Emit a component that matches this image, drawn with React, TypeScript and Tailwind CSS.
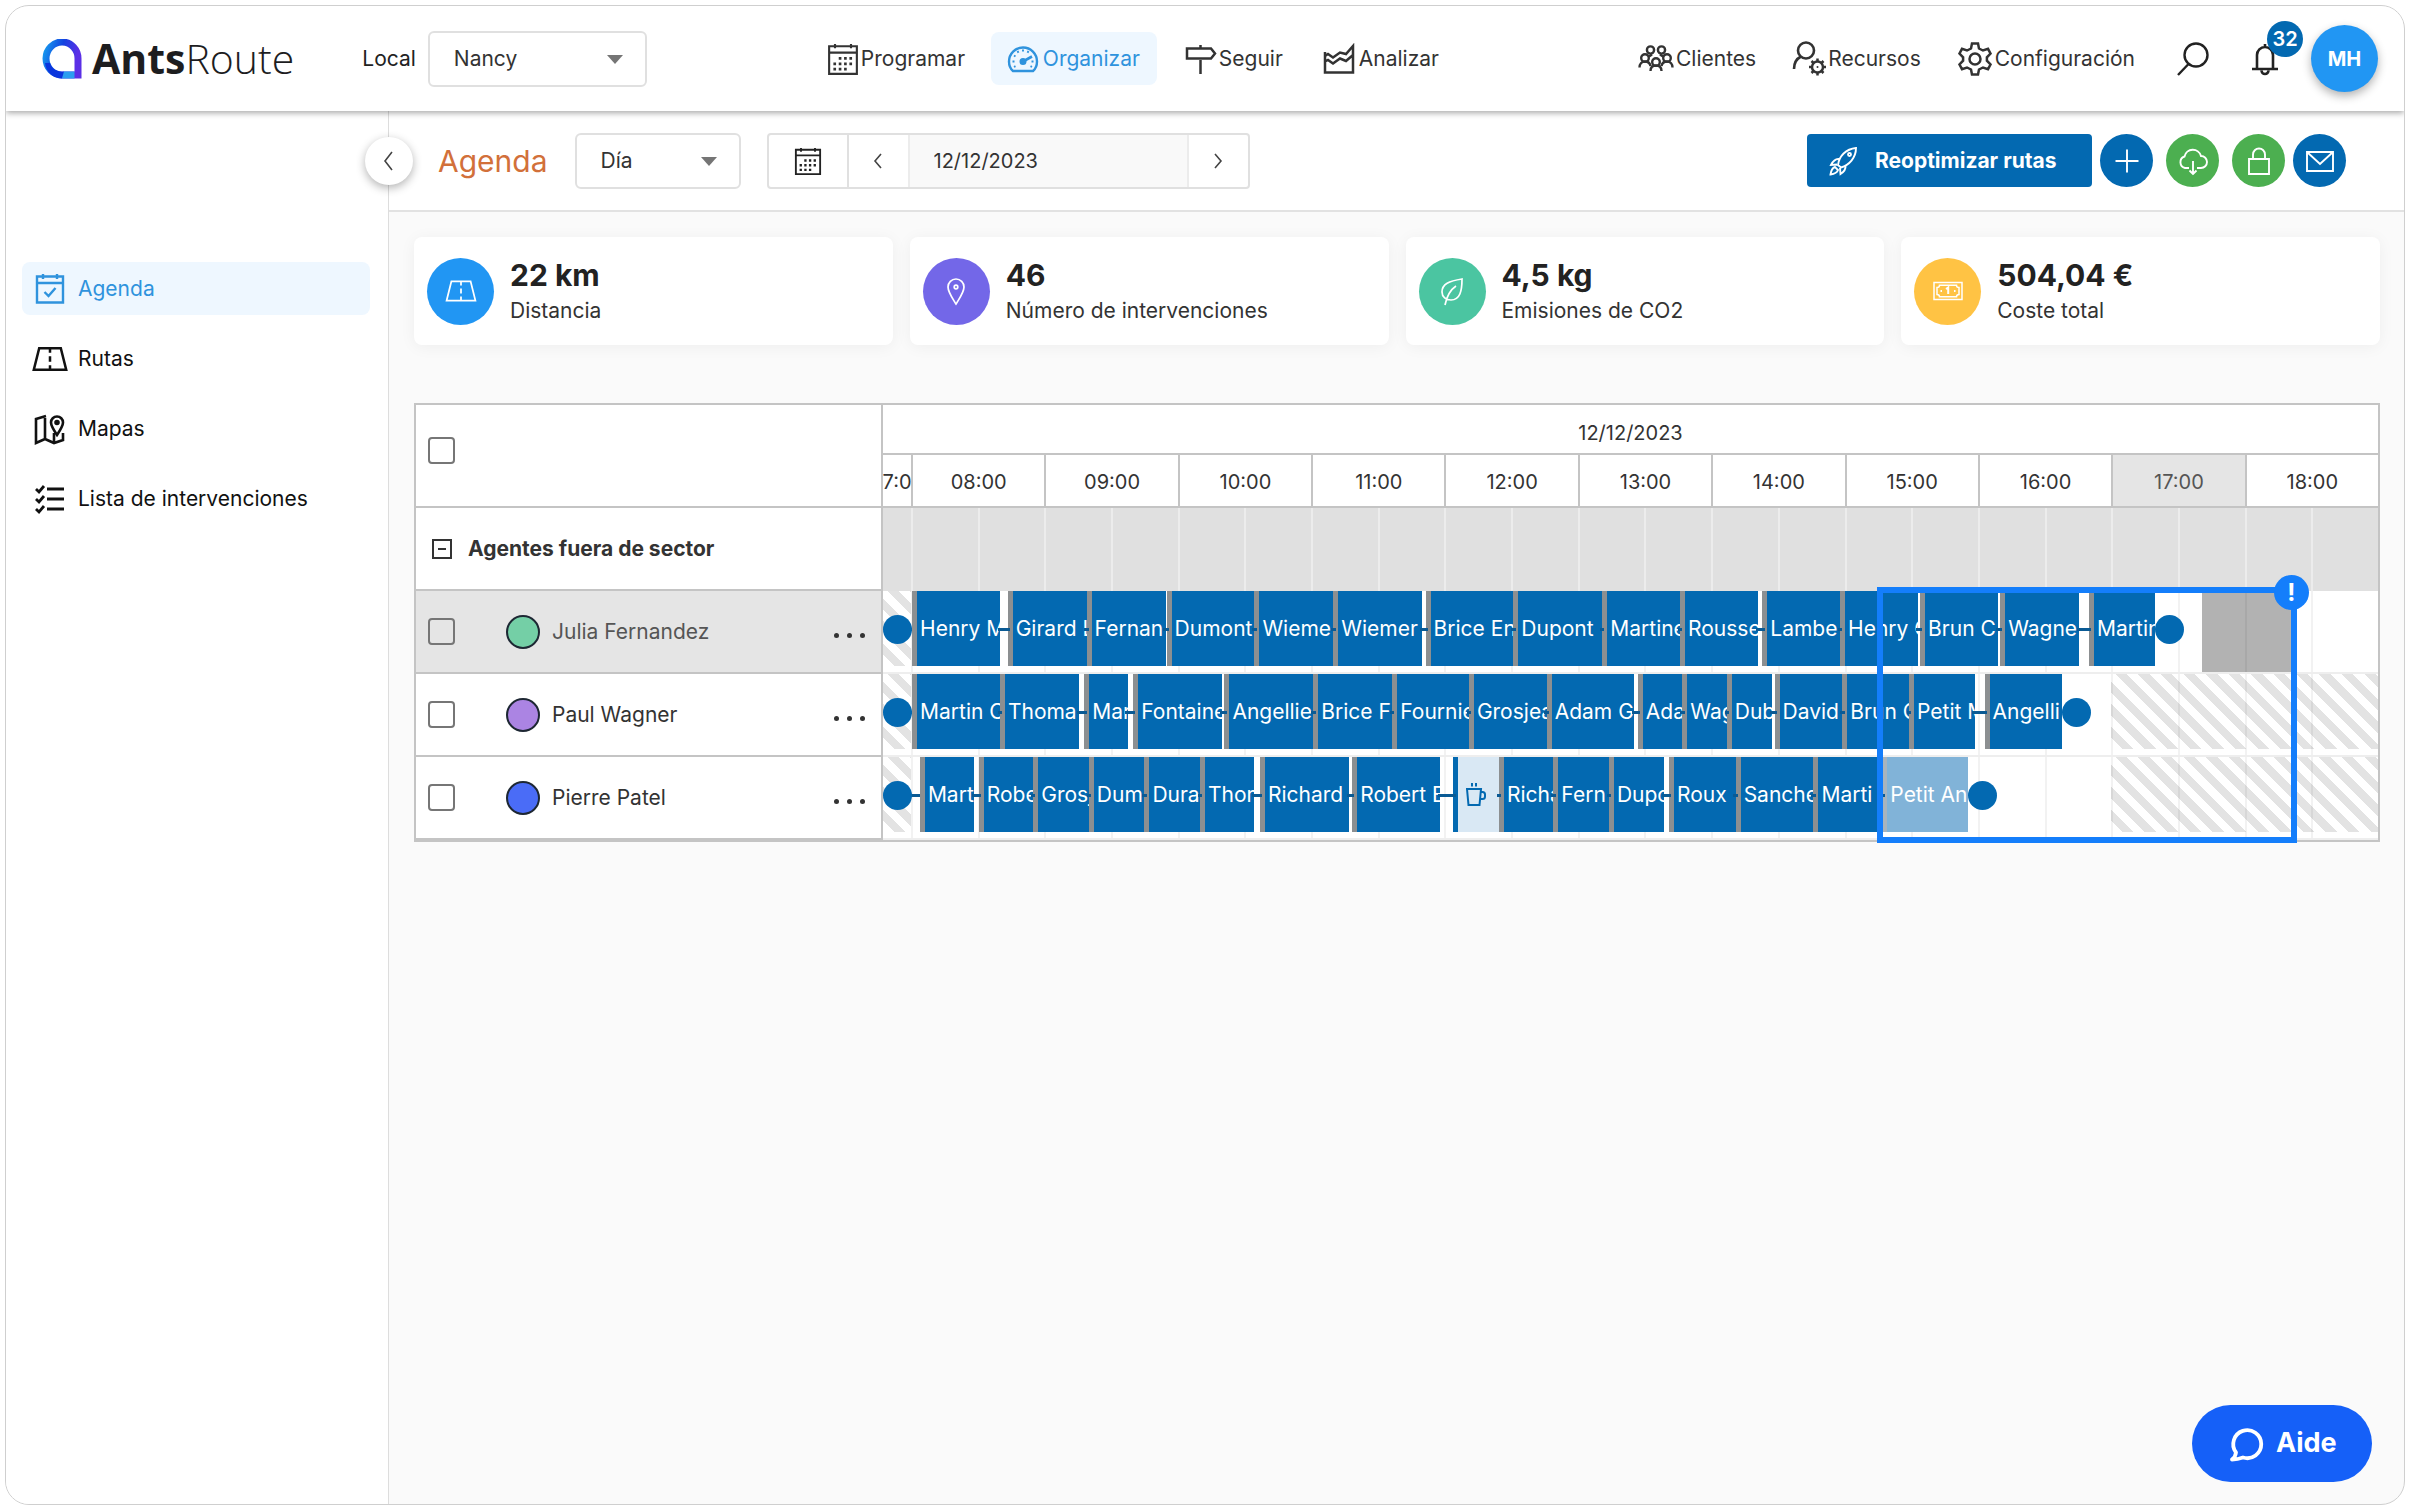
import type { ReactNode } from 'react'

type Stop = { name: string; from: number; to: number; kind?: 'break' | 'faded' }

// minutes counted from 08:00
const agents: { name: string; dot: string; active?: boolean; stops: Stop[] }[] = [
  {
    name: 'Julia Fernandez',
    dot: 'bg-[#74cfa6]',
    active: true,
    stops: [
      { name: 'Henry M', from: 0.5, to: 40 },
      { name: 'Girard L', from: 43.5, to: 79 },
      { name: 'Fernan', from: 79, to: 114.5 },
      { name: 'Dumont', from: 115, to: 154.5 },
      { name: 'Wieme', from: 154.5, to: 190 },
      { name: 'Wiemer', from: 190, to: 230 },
      { name: 'Brice En', from: 231.5, to: 271 },
      { name: 'Dupont', from: 271, to: 311 },
      { name: 'Martine', from: 311, to: 346 },
      { name: 'Rousse', from: 346, to: 381 },
      { name: 'Lambe', from: 383, to: 418 },
      { name: 'Henry C', from: 418, to: 453 },
      { name: 'Brun C', from: 454, to: 489 },
      { name: 'Wagne', from: 490, to: 525.5 },
      { name: 'Martin', from: 530, to: 559.5 },
    ],
  },
  {
    name: 'Paul Wagner',
    dot: 'bg-[#ab84e3]',
    stops: [
      { name: 'Martin C', from: 0.5, to: 40 },
      { name: 'Thoma', from: 40, to: 75.5 },
      { name: 'Mar', from: 78, to: 97.5 },
      { name: 'Fontaine', from: 100, to: 140 },
      { name: 'Angellie', from: 141, to: 181 },
      { name: 'Brice F', from: 181, to: 216.5 },
      { name: 'Fournie', from: 216.5, to: 251 },
      { name: 'Grosjea', from: 251, to: 286 },
      { name: 'Adam G', from: 286, to: 325.5 },
      { name: 'Ada', from: 327, to: 347 },
      { name: 'Wag', from: 347, to: 367 },
      { name: 'Dub', from: 367, to: 387.5 },
      { name: 'David', from: 388.5, to: 419 },
      { name: 'Brun C', from: 419, to: 449 },
      { name: 'Petit M', from: 449, to: 478.5 },
      { name: 'Angelli', from: 483, to: 518 },
    ],
  },
  {
    name: 'Pierre Patel',
    dot: 'bg-[#4a6cf7]',
    stops: [
      { name: 'Mart', from: 4, to: 28.5 },
      { name: 'Robe', from: 30.5, to: 55 },
      { name: 'Grosj', from: 55, to: 80 },
      { name: 'Dum', from: 80, to: 105 },
      { name: 'Dura', from: 105, to: 130 },
      { name: 'Thom', from: 130, to: 154.5 },
      { name: 'Richard', from: 157, to: 197 },
      { name: 'Robert B', from: 198.5, to: 238 },
      { name: '', from: 244, to: 264.5, kind: 'break' },
      { name: 'Richa', from: 264.5, to: 289 },
      { name: 'Fern', from: 289, to: 314 },
      { name: 'Dupo', from: 314, to: 339 },
      { name: 'Roux', from: 341, to: 371 },
      { name: 'Sanche', from: 371, to: 406 },
      { name: 'Marti', from: 406, to: 437 },
      { name: 'Petit An', from: 437, to: 475.5, kind: 'faded' },
    ],
  },
]

const hours = ['08:00', '09:00', '10:00', '11:00', '12:00', '13:00', '14:00', '15:00', '16:00', '17:00', '18:00']
const pct = (min: number) => `${(min / 660) * 100}%`

function Icon({ className, box = 32, w = 2, children }: { className: string; box?: number; w?: number; children: ReactNode }) {
  return (
    <svg viewBox={`0 0 ${box} ${box}`} className={`shrink-0 ${className}`} fill="none" stroke="currentColor" strokeWidth={w} aria-hidden="true">
      {children}
    </svg>
  )
}

function CalendarIcon({ className }: { className: string }) {
  return (
    <Icon className={className} box={30}>
      <path d="M2 3h26v26H2zM2 9h26M7.500 1v4M22.500 1v4" />
      <path d="M11 14.500h2.500M16 14.500h2.500M21 14.500h2.500M6 19.500h2.500M11 19.500h2.500M16 19.500h2.500M21 19.500h2.500M6 24.500h2.500M11 24.500h2.500M16 24.500h2.500" strokeWidth={2.600} />
    </Icon>
  )
}

function GaugeIcon() {
  return (
    <Icon className="size-8">
      <path d="M6 28C3 25.500 2 22 2 18.500a14 14 0 0 1 28 0c0 3.500-1 7-4 9.500z" strokeWidth={2.400} />
      <path d="M16 6.500v2M10.500 8l1 1.800M21.500 8l-1 1.800M7 12.500l1.500 1M5.500 18.500h2M24.500 18.500h2M7 24l1.500-.8M25 24l-1.500-.8" strokeWidth={1.900} />
      <path d="M16 18.500l9-5" strokeWidth={2.600} />
      <circle cx="16" cy="18.500" r="2.500" fill="currentColor" />
    </Icon>
  )
}

function SignIcon() {
  return (
    <Icon className="size-8">
      <path d="M2 5.500h24l4 5-4 5H2zM15.500 2v3.500M15.500 17v14" strokeWidth={2.500} />
    </Icon>
  )
}

function ChartIcon() {
  return (
    <Icon className="size-8">
      <path d="M2 9v20.500h28V3l-7 8-6-1.500-7 5L5 11 2 13M2 18.500l3-1.500 5 3.500 7-5 6 2.500 7-6" strokeWidth={2.500} />
    </Icon>
  )
}

function PeopleIcon() {
  return (
    <Icon className="size-9" box={36} w={2.400}>
      <circle cx="12.500" cy="9" r="3.600" />
      <circle cx="23.500" cy="9" r="3.600" />
      <circle cx="7" cy="17" r="3.800" />
      <circle cx="29" cy="17" r="3.800" />
      <circle cx="18" cy="21" r="3.800" />
      <path d="M1.500 26.500c0-3.500 2-6 5.500-6s5 2 5.500 4.500M34.500 26.500c0-3.500-2-6-5.500-6s-5 2-5.500 4.500M12.500 30c0-3.200 2-5.500 5.500-5.500s5.500 2.300 5.500 5.500M11 15.500l3-2M25 15.500l-3-2" />
    </Icon>
  )
}

function ResourcesIcon() {
  return (
    <Icon className="size-9" box={36}>
      <circle cx="14" cy="9.500" r="8" strokeWidth={2.600} />
      <path d="M9 15.500C5 17.500 2 21.500 2 28" strokeWidth={2.600} />
      <circle cx="25.500" cy="26" r="5.500" strokeWidth={2.500} />
      <path d="M25.500 17.500v3M25.500 31.500v3M17 26h3M31 26h3M19.500 20l2 2M29.500 30l2 2M31.500 20l-2 2M21.500 30l-2 2" strokeWidth={2.500} />
      <circle cx="25.500" cy="26" r="1" fill="currentColor" stroke="none" />
    </Icon>
  )
}

function GearIcon() {
  return (
    <Icon className="size-9" box={36}>
      <path d="M15 2.500h6l1 5 4 2 5-1.700 2.500 4.700-3.600 3.800v3.400l3.600 3.800-2.500 4.700-5-1.700-4 2-1 5h-6l-1-5-4-2-5 1.700-2.500-4.700 3.600-3.800v-3.400L2.500 12.500 5 7.800l5 1.700 4-2z" strokeWidth={2.500} />
      <circle cx="18" cy="18" r="5.500" strokeWidth={2.500} />
    </Icon>
  )
}

function RoadIcon({ className, w }: { className: string; w?: number }) {
  return (
    <Icon className={className} box={40} w={w}>
      <path d="M8 8h24l6 24H2zM20 8v5M20 17v6M20 27v5" />
    </Icon>
  )
}

function Chevron({ d }: { d: string }) {
  return (
    <Icon className="size-5 text-[#444]" box={20} w={1.600}>
      <path d={d} />
    </Icon>
  )
}

function Dropdown({ label, value, className }: { label: string; value: string; className: string }) {
  return (
    <div className={`relative h-14 ${className}`}>
      <select aria-label={label} className="size-full appearance-none rounded-md border-2 border-[#e0e0e0] bg-white pl-6 text-[21px] text-[#333]">
        <option>{value}</option>
      </select>
      <svg viewBox="0 0 16 9" className="pointer-events-none absolute top-6 right-6 h-[9px] w-4" aria-hidden="true">
        <path d="M0 0h16L8 9z" fill="#757575" />
      </svg>
    </div>
  )
}

function Header() {
  return (
    <header className="relative z-20 flex h-[105px] shrink-0 items-center bg-white pr-[26px] pl-9 shadow-[0_2px_6px_rgba(0,0,0,0.35)]">
      <a href="#" className="flex items-center" aria-label="AntsRoute">
        <svg viewBox="0 0 40 40" className="size-10" aria-hidden="true">
          <defs>
            <linearGradient id="logo" x1="0" y1="0" x2="1" y2="0.3">
              <stop offset="0" stopColor="#1798ee" />
              <stop offset="0.5" stopColor="#1243e0" />
              <stop offset="1" stopColor="#5b2fe6" />
            </linearGradient>
          </defs>
          <path d="M36 36V20A16 16.500 0 1 0 20 36z" fill="none" stroke="url(#logo)" strokeWidth="7" />
          <path d="M3 24A17.500 17.500 0 0 0 20 39.500l2-7A12 12 0 0 1 8 24z" fill="#0a35dd" />
          <path d="M22 32.500h10.500v7H20z" fill="#2a9df0" />
        </svg>
        <span className="ml-2.5 font-['Open_Sans'] text-[41px] leading-none text-[#1d1d1f]">
          <b className="font-bold">Ants</b>
          <span className="font-light">Route</span>
        </span>
      </a>
      <span className="mr-3 ml-[68px] text-[21px] text-[#222]">Local</span>
      <Dropdown label="Local" value="Nancy" className="w-[219px]" />
      <nav className="ml-[164px] flex items-center text-[21px] text-[#333]">
        <a href="#" className="flex h-[53px] w-[180px] items-center gap-0.5 pl-4">
          <CalendarIcon className="size-8" />
          Programar
        </a>
        <a href="#" className="flex h-[53px] w-[166px] items-center gap-1 rounded-lg bg-[#eef7ff] pl-4 text-[#2f93dd]">
          <GaugeIcon />
          Organizar
        </a>
        <a href="#" className="flex h-[53px] w-[138px] items-center gap-0.5 pl-7">
          <SignIcon />
          Seguir
        </a>
        <a href="#" className="flex h-[53px] items-center gap-1 pl-7">
          <ChartIcon />
          Analizar
        </a>
      </nav>
      <div className="ml-auto flex items-center text-[21px] text-[#333]">
        <a href="#" className="mr-9 flex items-center gap-0.5">
          <PeopleIcon />
          Clientes
        </a>
        <a href="#" className="mr-9 flex items-center">
          <ResourcesIcon />
          Recursos
        </a>
        <a href="#" className="flex items-center gap-0.5">
          <GearIcon />
          Configuración
        </a>
        <button aria-label="Buscar" className="ml-10">
          <Icon className="size-9 text-[#222]" box={36} w={2.400}>
            <circle cx="21" cy="14" r="11.500" />
            <path d="M13.500 23L3 34" />
          </Icon>
        </button>
        <button aria-label="Notificaciones" className="relative ml-9">
          <Icon className="size-9 text-[#222]" box={36} w={2.600}>
            <path d="M10 28V14a8 8 0 0 1 16 0v14M5 28h26M18 3v3M14.500 29.500a3.500 3.500 0 0 0 7 0" />
          </Icon>
          <span className="absolute -top-5 left-5 flex size-9 items-center justify-center rounded-full bg-[#0369b1] text-xl font-semibold text-white">32</span>
        </button>
        <button className="ml-7 size-[67px] rounded-full bg-[#2196f3] text-xl font-bold text-white shadow-[0_4px_10px_rgba(0,0,0,0.3)]">MH</button>
      </div>
    </header>
  )
}

function Sidebar() {
  const item = 'flex h-[53px] items-center gap-2.5 rounded-lg pl-2.5'
  return (
    <aside className="w-[383px] shrink-0 border-r border-[#ddd] bg-white pt-[151px] pr-[18px] pl-4">
      <nav className="flex flex-col gap-[17px] text-[21px] text-[#111]">
        <a href="#" className={`${item} bg-[#eef7ff] text-[#2f93dd]`}>
          <Icon className="size-9" box={36} w={2.400}>
            <path d="M5 5.500h26v26H5zM5 12h26M11 3v5M25 3v5M12.500 21l4 4 7-8" />
          </Icon>
          Agenda
        </a>
        <a href="#" className={item}>
          <RoadIcon className="size-9" w={2.800} />
          Rutas
        </a>
        <a href="#" className={item}>
          <Icon className="size-9" box={36} w={2.600}>
            <path d="M14 5L4 8v24l9-4 9 4 9-3V22M13 7v21M22 22v10" />
            <path d="M25 24c-4-6-6-9-6-12.500a6 6 0 0 1 12 0C31 15 29 18 25 24z" />
            <circle cx="25" cy="11.500" r="1.500" fill="currentColor" />
          </Icon>
          Mapas
        </a>
        <a href="#" className={item}>
          <Icon className="size-9" box={36} w={2.800}>
            <path d="M15 8h17M15 18h17M15 28h17M4 8l3 3 5-6M4 18l3 3 5-6M4 28l3 3 5-6" />
          </Icon>
          Lista de intervenciones
        </a>
      </nav>
    </aside>
  )
}

const round = 'flex size-[53px] items-center justify-center rounded-full text-white'

function Toolbar() {
  return (
    <div className="relative flex h-[101px] shrink-0 items-center border-b-2 border-[#e2e2e2] bg-white pr-[58px] pl-[49px]">
      <button aria-label="Plegar menú" className="absolute top-[26px] -left-6 flex size-12 items-center justify-center rounded-full bg-white shadow-[0_3px_10px_rgba(0,0,0,0.3)]">
        <Chevron d="M13 1L6 10l7 9" />
      </button>
      <h1 className="text-3xl text-[#d2703a]">Agenda</h1>
      <Dropdown label="Vista" value="Día" className="ml-[27px] w-[166px]" />
      <div className="ml-[26px] flex h-14 rounded border-2 border-[#e0e0e0]">
        <button aria-label="Calendario" className="flex w-20 items-center justify-center border-r-2 border-[#e0e0e0] text-[#222]">
          <CalendarIcon className="size-7" />
        </button>
        <button aria-label="Día anterior" className="flex w-[61px] items-center justify-center border-r-2 border-[#ececec]">
          <Chevron d="M13 3l-6 7 6 7" />
        </button>
        <input aria-label="Fecha" defaultValue="12/12/2023" className="w-[277px] bg-[#f9f9f9] pl-6 text-xl text-[#333]" />
        <button aria-label="Día siguiente" className="flex w-[61px] items-center justify-center border-l-2 border-[#ececec]">
          <Chevron d="M7 3l6 7-6 7" />
        </button>
      </div>
      <button className="ml-auto flex h-[53px] w-[285px] items-center gap-4 rounded bg-[#0369b1] pl-5 text-[21px] font-bold text-white">
        <Icon className="size-8" w={1.900}>
          <path d="M11 20C12 11 19 4 29 3c0 10-7 17-15 19.500zM12 14c-4-.5-6 2-8 6l6-.5M18.500 21c.5 4-2 6-5 8l-.5-6M8 22c-3 1-4 4-4.500 7.500C7 29 10 28 11 25z" />
          <circle cx="22.500" cy="9.500" r="1.500" />
        </Icon>
        Reoptimizar rutas
      </button>
      <button aria-label="Añadir" className={`${round} ml-2 bg-[#0369b1]`}>
        <Icon className="size-8" w={1.900}>
          <path d="M16 4.500v23M4.500 16h23" />
        </Icon>
      </button>
      <button aria-label="Descargar" className={`${round} ml-[13px] bg-[#4caf50]`}>
        <Icon className="size-8" w={1.900}>
          <path d="M12 23H8a6 6 0 0 1-.5-11.500A8.500 8.500 0 0 1 24 11a6 6 0 0 1 0 12h-4M16 16v13M12.500 25.500L16 29l3.500-3.500" />
        </Icon>
      </button>
      <button aria-label="Bloquear" className={`${round} ml-[13px] bg-[#4caf50]`}>
        <Icon className="size-8" w={1.900}>
          <path d="M6 14h20v15H6zM10 14V9.500a6 6 0 0 1 12 0V14" />
        </Icon>
      </button>
      <button aria-label="Enviar" className={`${round} ml-2 bg-[#0369b1]`}>
        <Icon className="size-8" w={1.900}>
          <path d="M3 7h26v19H3zM3 7l13 12L29 7" />
        </Icon>
      </button>
    </div>
  )
}

const stats = [
  { value: '22 km', label: 'Distancia', color: 'bg-[#2196f3]', icon: <RoadIcon className="size-8" w={2.200} /> },
  {
    value: '46',
    label: 'Número de intervenciones',
    color: 'bg-[#7367e8]',
    icon: (
      <Icon className="size-8" w={1.700}>
        <path d="M16 29c-5-8-8-12-8-17a8 8 0 0 1 16 0c0 5-3 9-8 17z" />
        <circle cx="16" cy="12" r="1.800" />
      </Icon>
    ),
  },
  {
    value: '4,5 kg',
    label: 'Emisiones de CO2',
    color: 'bg-[#4bc5a1]',
    icon: (
      <Icon className="size-8" w={1.700}>
        <path d="M26 4C13 6 6 9 6 17c0 5 4 8 9 8 9 0 11-9 11-21zM20 11c-6 4-9 9-11 19" />
      </Icon>
    ),
  },
  {
    value: '504,04 €',
    label: 'Coste total',
    color: 'bg-[#ffc344]',
    icon: (
      <Icon className="size-8" w={1.500}>
        <path d="M2 7.500h28v17H2zM5 12.500c1.500 0 2.500-.8 2.500-2.300h17c0 1.500 1 2.300 2.500 2.300v7c-1.500 0-2.500.8-2.500 2.300h-17c0-1.500-1-2.300-2.500-2.300z" />
        <path d="M14 14l2.200-1.500V19M8.500 16h1.500M22 16h1.500" strokeWidth={2} />
      </Icon>
    ),
  },
]

function Stats() {
  return (
    <div className="grid grid-cols-4 gap-[17px]">
      {stats.map((s) => (
        <div key={s.label} className="flex h-[108px] items-center gap-4 rounded-lg bg-white pl-[13px] shadow-[0_2px_16px_rgba(0,0,0,0.05)]">
          <span className={`flex size-[67px] items-center justify-center rounded-full text-white ${s.color}`}>{s.icon}</span>
          <div>
            <p className="text-3xl leading-10 font-bold text-[#222]">{s.value}</p>
            <p className="text-[21px] leading-8 text-[#333]">{s.label}</p>
          </div>
        </div>
      ))}
    </div>
  )
}

const hatch = 'bg-[repeating-linear-gradient(45deg,transparent_0_8px,#e3e3e3_8px_16px)]'
const box = 'block size-[27px] appearance-none rounded border-2 border-[#767676]'

function GridLines() {
  return (
    <div className="absolute inset-y-0 right-0 left-7 grid grid-cols-[repeat(22,minmax(0,1fr))]">
      {Array.from({ length: 22 }, (_, i) => (
        <i key={i} className="border-l-2 border-black/5" />
      ))}
    </div>
  )
}

function StopBlock({ stop }: { stop: Stop }) {
  const place = { left: pct(stop.from), width: pct(stop.to - stop.from) }
  if (stop.kind === 'break') {
    return (
      <div className="absolute top-0 flex h-[75px] items-center border-l-5 border-[#0369b1] bg-[#d9e8f4] pl-2 text-[#0369b1]" style={place}>
        <Icon className="size-6" box={24} w={2}>
          <path d="M1 6h14l-1.500 16h-11zM15 9h1.500a2.500 2.500 0 0 1 2.500 2.500v2a2.500 2.500 0 0 1-2.500 2.500H14.500M6 0v3.500M10 0v3.500" />
        </Icon>
      </div>
    )
  }
  return (
    <div
      className={`absolute top-0 flex h-[75px] items-center overflow-hidden pl-[3px] text-[21px] whitespace-nowrap text-white ${
        stop.kind === 'faded' ? 'border-l-5 border-[#a9b4bd] bg-[#81b3d8]' : 'border-l-5 border-[#8c8f91] bg-[#0369b1]'
      }`}
      style={place}
    >
      {stop.name}
    </div>
  )
}

function Lane({ agent, children }: { agent: (typeof agents)[number]; children?: ReactNode }) {
  const { stops } = agent
  const last = stops[stops.length - 1]
  return (
    <div className="relative h-[83px] border-b-2 border-[#eee] bg-white">
      <div className={`absolute top-0 left-0 h-[75px] w-7 ${hatch}`} />
      <div className="absolute inset-y-0 right-0 left-7">
        {!agent.active && <div className={`absolute top-0 right-0 h-[75px] ${hatch}`} style={{ left: pct(540) }} />}
        {agent.active && <div className="absolute inset-y-0 bg-[#b2b2b2]" style={{ left: pct(581), width: pct(41) }} />}
      </div>
      <GridLines />
      <div className="absolute inset-y-0 right-0 left-7">
        {stops.map((s) => (
          <StopBlock key={s.from} stop={s} />
        ))}
        {/* travel links between two stops */}
        {stops.map((s, i) => (
          <i key={s.from} className="absolute top-[37px] h-[3px] bg-[#0a5a94]" style={{ left: pct(i ? stops[i - 1].to - 1 : -2), width: pct(i ? s.from - stops[i - 1].to + 2 : s.from + 2) }} />
        ))}
        <i className="absolute top-6 size-[29px] rounded-full bg-[#0369b1]" style={{ left: pct(last.to) }} />
        {children}
      </div>
      <i className="absolute top-6 left-0 size-[29px] rounded-full bg-[#0369b1]" />
    </div>
  )
}

function Planning() {
  const cell = 'border-r-2 border-b-2 border-[#c4c4c4] bg-white p-0 text-left'
  return (
    <table className="mt-[58px] w-full table-fixed border-separate border-spacing-0 border-2 border-[#c4c4c4] text-xl text-[#333]">
      <colgroup>
        <col className="w-[467px]" />
        <col />
      </colgroup>
      <thead>
        <tr>
          <th rowSpan={2} className={`${cell} pl-3 align-middle`}>
            <div className="h-[100px] pt-[31px]">
              <input type="checkbox" aria-label="Seleccionar todo" className={box} />
            </div>
          </th>
          <th className="border-b-2 border-[#c4c4c4] bg-white p-0 font-normal">
            <div className="h-12 pt-2 leading-10">12/12/2023</div>
          </th>
        </tr>
        <tr>
          <th className="border-b-2 border-[#c4c4c4] bg-white p-0 font-normal">
            <div className="flex h-[51px] overflow-hidden text-center leading-[55px]">
              <span className="flex w-7 shrink-0 justify-center overflow-hidden">7:0</span>
              <div className="grid flex-1 grid-cols-11">
                {hours.map((h) => (
                  <span key={h} className={`border-l-2 border-[#c4c4c4] ${h === '17:00' ? 'bg-[#e5e5e5] text-[#555]' : ''}`}>
                    {h}
                  </span>
                ))}
              </div>
            </div>
          </th>
        </tr>
      </thead>
      <tbody>
        <tr>
          <th scope="row" className={`${cell} pl-4`}>
            <div className="flex h-[81px] items-center gap-4 text-[21px] font-bold">
              <button aria-label="Plegar grupo" className="flex size-5 items-center justify-center border-2 border-[#333]">
                <i className="h-0.5 w-2 bg-[#333]" />
              </button>
              Agentes fuera de sector
            </div>
          </th>
          <td className="relative bg-[#e0e0e0] p-0">
            <div className="absolute inset-y-0 right-0 left-7 grid grid-cols-[repeat(22,minmax(0,1fr))]">
              {Array.from({ length: 22 }, (_, i) => (
                <i key={i} className="border-l-2 border-[#ececec]" />
              ))}
            </div>
          </td>
        </tr>
        {agents.map((a, i) => (
          <tr key={a.name}>
            <th scope="row" className={`border-r-2 border-b-2 border-[#c4c4c4] p-0 pr-4 pl-3 font-normal ${a.active ? 'bg-[#e5e5e5] text-[#555]' : 'bg-white'}`}>
              <div className="flex h-[81px] items-center text-[21px]">
                <input id={`agent-${i}`} type="checkbox" className={box} />
                <i className={`ml-[51px] size-[34px] rounded-full border-2 border-[#1d2733] ${a.dot}`} />
                <label htmlFor={`agent-${i}`} className="ml-3">
                  {a.name}
                </label>
                <button aria-label={`Opciones de ${a.name}`} className="mt-2 ml-auto flex gap-2">
                  <i className="size-[5px] rounded-full bg-[#333]" />
                  <i className="size-[5px] rounded-full bg-[#333]" />
                  <i className="size-[5px] rounded-full bg-[#333]" />
                </button>
              </div>
            </th>
            <td className="p-0">
              <Lane agent={a}>
                {a.active && (
                  <div className="absolute -top-1 z-10 h-64 border-6 border-[#147efb]" style={{ left: pct(434.5), width: pct(189) }}>
                    <span className="absolute -top-[18px] -right-[18px] flex size-[35px] items-center justify-center rounded-full bg-[#147efb] text-2xl font-bold text-white">!</span>
                  </div>
                )}
              </Lane>
            </td>
          </tr>
        ))}
      </tbody>
    </table>
  )
}

export default function App() {
  return (
    <div className="flex min-h-screen bg-white p-[5px] font-['Inter',sans-serif]">
      <div className="flex flex-1 flex-col overflow-hidden rounded-3xl border border-[#cfcfcf] bg-[#fafafa]">
        <Header />
        <div className="flex flex-1">
          <Sidebar />
          <main className="flex min-w-0 flex-1 flex-col">
            <Toolbar />
            <div className="pt-[25px] pr-6 pl-[25px]">
              <Stats />
              <Planning />
            </div>
          </main>
        </div>
        <button className="fixed right-[38px] bottom-7 flex h-[77px] w-[180px] items-center gap-3 rounded-full bg-[#1560f8] pl-9 text-[27px] font-bold text-white">
          <Icon className="size-9" box={36} w={3.800}>
            <path d="M8 26.500A14 14 0 1 1 15 31.500c-4 1.500-7 2-11 2 2.500-1.500 3.500-3.500 4-7z" strokeLinejoin="round" />
          </Icon>
          Aide
        </button>
      </div>
    </div>
  )
}
